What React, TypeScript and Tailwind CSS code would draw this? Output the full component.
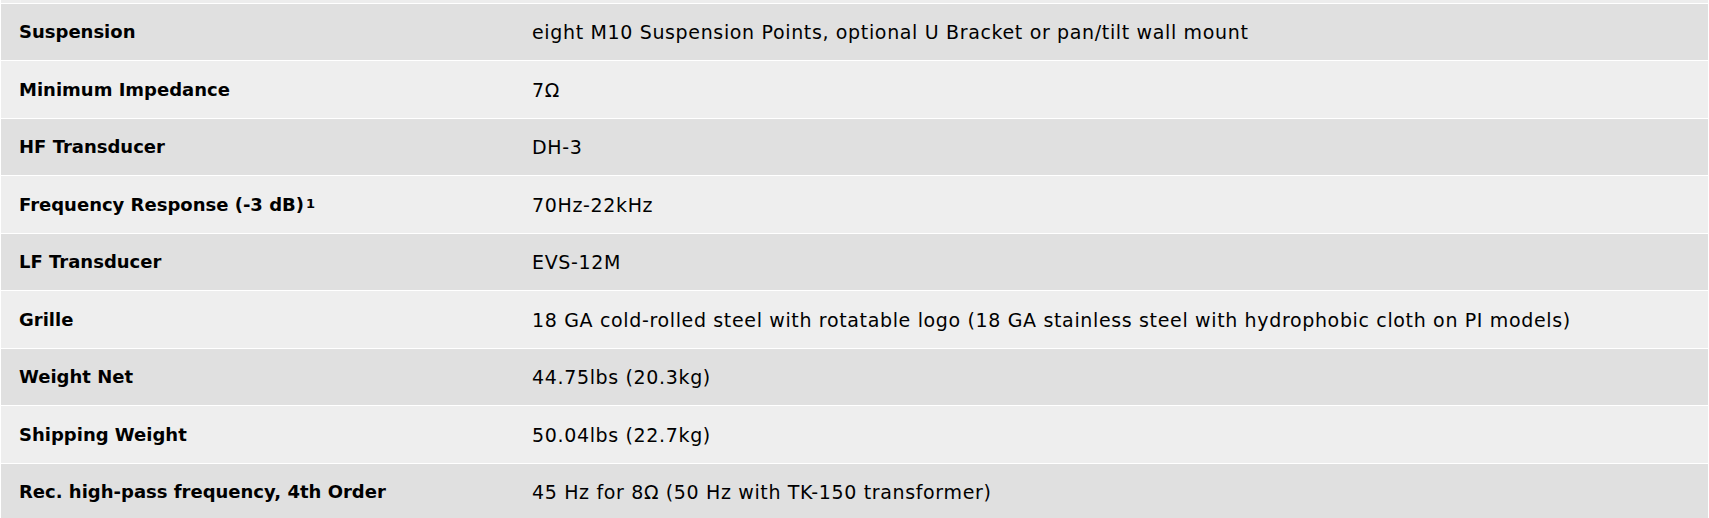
import React from 'react';

type Spec = { label: React.ReactNode; value: string };

const specs: Spec[] = [
  { label: 'Suspension', value: 'eight M10 Suspension Points, optional U Bracket or pan/tilt wall mount' },
  { label: 'Minimum Impedance', value: '7Ω' },
  { label: 'HF Transducer', value: 'DH-3' },
  {
    label: (
      <>
        Frequency Response (-3 dB)<sup className="ml-[2px] text-[13px] relative -top-[3px]">1</sup>
      </>
    ),
    value: '70Hz-22kHz',
  },
  { label: 'LF Transducer', value: 'EVS-12M' },
  { label: 'Grille', value: '18 GA cold-rolled steel with rotatable logo (18 GA stainless steel with hydrophobic cloth on PI models)' },
  { label: 'Weight Net', value: '44.75lbs (20.3kg)' },
  { label: 'Shipping Weight', value: '50.04lbs (22.7kg)' },
  { label: 'Rec. high-pass frequency, 4th Order', value: '45 Hz for 8Ω (50 Hz with TK-150 transformer)' },
];

export default function App() {
  return (
    <div className="w-[1709px] h-[518px] overflow-hidden bg-white px-px flex flex-col gap-px font-['DejaVu_Sans',sans-serif] text-black">
      <div className="h-[3px] shrink-0 bg-[#ededed]" />
      {specs.map((s, i) => {
        const dark = i % 2 === 0;
        return (
          <div
            key={i}
            className={`flex items-center shrink-0 ${dark ? 'h-[56px] bg-[#e0e0e0]' : 'h-[57px] bg-[#eeeeee]'}`}
          >
            <div className="w-[531px] shrink-0 pl-[18px] text-[18px] leading-6 font-bold">{s.label}</div>
            <div className="text-[19px] leading-6 tracking-[0.65px]">{s.value}</div>
          </div>
        );
      })}
    </div>
  );
}
